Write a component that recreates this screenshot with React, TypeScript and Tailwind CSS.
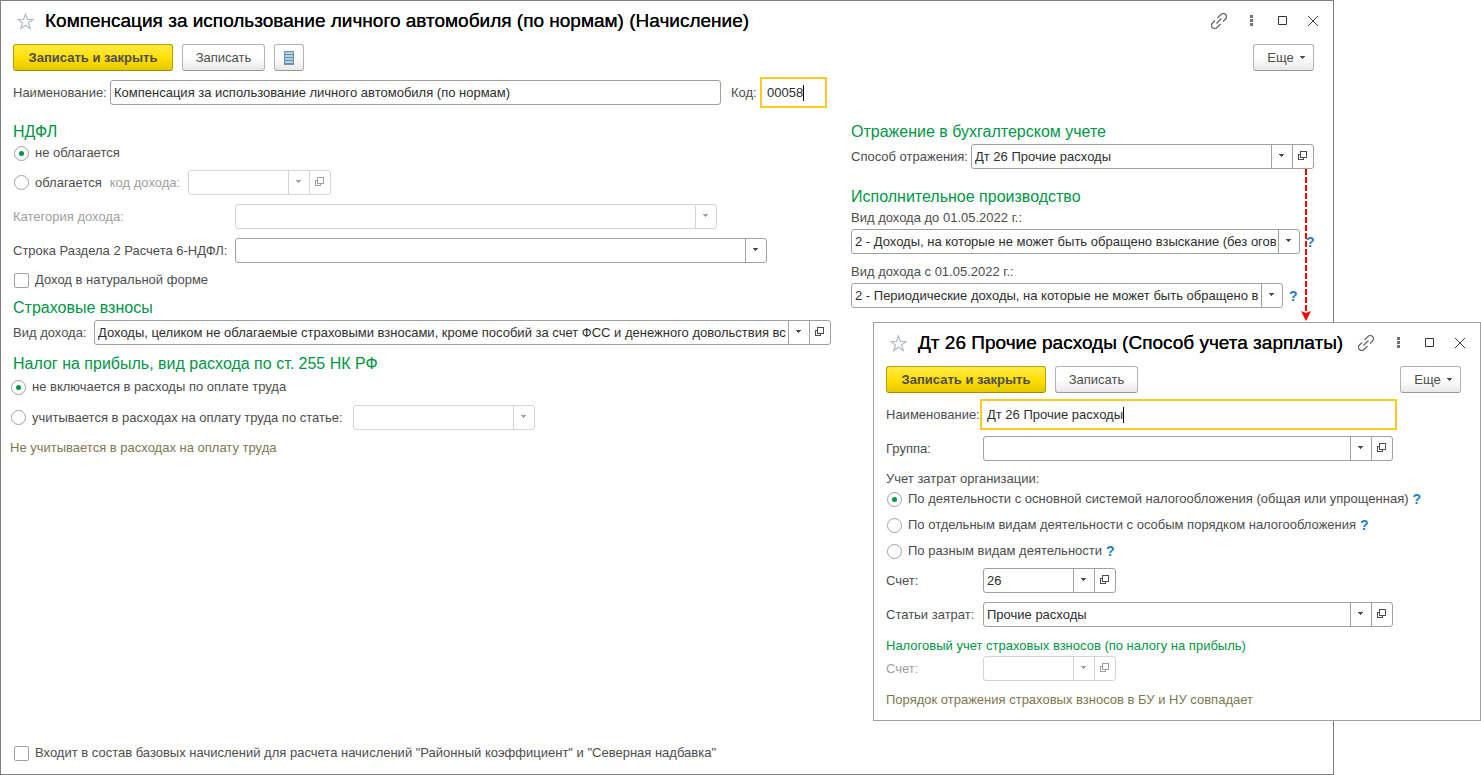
import React, {ReactNode, useId, useState} from "react"
import clsx from "clsx"

type ComboProps = {
    id?: string
    label?: string
    value?: string
    disabled?: boolean
    open?: boolean
    className?: string
}

const OpenIcon = () => <svg width="9" height="9" viewBox="0 0 9 9" fill="none" stroke="currentColor" shapeRendering="crispEdges">
    <path d="M2.500.5h6v6h-6zM2 3.500H.5v5h5V7" />
    <path d="M2.500 3v3" />
</svg>

const Caret = () => <svg width="5" height="3" viewBox="0 0 5 3" fill="currentColor" shapeRendering="crispEdges">
    <path d="M0 0h5v1h-1v1h-1v1h-1v-1h-1v-1h-1z" />
</svg>

function Combo({id, label, value = '', disabled, open, className}: ComboProps) {
    return <div className={clsx('flex h-[25px] rounded-[3px] border bg-white', disabled ? 'border-[#d4d4d4] text-[#a0a0a0]' : 'border-[#a0a0a0] text-[#4d4d4d]', className)}>
        <div className="relative min-w-0 flex-1">
            <select
                id={id}
                aria-label={label}
                disabled={disabled}
                className="h-full w-full appearance-none overflow-hidden bg-transparent pr-[23px] pl-[3px] whitespace-nowrap text-[#2e2e2e] opacity-100 outline-none"
            >
                <option>{value}</option>
            </select>
            <span className={clsx('pointer-events-none absolute inset-y-0 right-0 flex w-[21px] items-center justify-center border-l pr-px pb-[2px]', disabled ? 'border-[#d4d4d4]' : 'border-[#a0a0a0]')}>
                <Caret />
            </span>
        </div>
        {open && <button
            type="button"
            aria-label="Открыть"
            disabled={disabled}
            className={clsx('flex w-[21px] items-center justify-center border-l pr-px pb-[2px]', disabled ? 'border-[#d4d4d4]' : 'border-[#a0a0a0]')}
        >
            <OpenIcon />
        </button>}
    </div>
}

function ActiveInput({id, value, className}: {id: string, value: string, className?: string}) {
    const [text, setText] = useState<string>(value)

    return <div className={clsx('flex h-[31px] items-center border-2 border-[#fbcb1f] bg-white pl-[5px]', className)}>
        <input id={id} value={text} onChange={e => setText(e.target.value)} className="[field-sizing:content] text-[#2e2e2e] outline-none" />
        <span className="h-4 w-px bg-black" />
    </div>
}

function Radio({name, checked, children}: {name: string, checked?: boolean, children: ReactNode}) {
    return <label className="flex items-center gap-[6px] pl-px">
        <input
            type="radio"
            name={name}
            defaultChecked={checked}
            className="grid size-[15px] shrink-0 appearance-none place-items-center rounded-full border border-[#a0a0a0] bg-white checked:before:size-[5px] checked:before:rounded-full checked:before:bg-[#009646]"
        />
        {children}
    </label>
}

function Checkbox({children}: {children: ReactNode}) {
    return <label className="flex h-[22px] items-center gap-[6px] pl-px">
        <input type="checkbox" className="size-[15px] shrink-0 appearance-none rounded-[2px] border border-[#a0a0a0] bg-white checked:bg-[#009646]" />
        {children}
    </label>
}

const Help = () => <button type="button" aria-label="Справка" className="text-sm leading-4 font-bold text-[#1a80c4]">?</button>

const Heading = ({children}: {children: ReactNode}) => <h2 className="h-5 text-base leading-[22px] whitespace-nowrap text-[#009646]">{children}</h2>

function TitleBar({title}: {title: string}) {
    return <header className="flex h-[43px] items-center pr-[14px] pb-[3px] pl-4">
        <button type="button" aria-label="Избранное">
            <svg width="17" height="17" viewBox="0 0 17 17" fill="none" stroke="#b4bac0" strokeWidth="1.200">
                <path d="M8.500 1L10.400 6.400L16.100 6.500L11.500 10L13.200 15.500L8.500 12.200L3.800 15.500L5.500 10L.9 6.500L6.600 6.400Z" />
            </svg>
        </button>
        <h1 className="ml-[11px] flex-1 text-[19px] leading-6 whitespace-nowrap text-black [text-shadow:0_0_0_#000]">{title}</h1>
        <div className="flex items-center text-[#4d4d4d]">
            <button type="button" aria-label="Получить ссылку">
                <svg width="16" height="16" viewBox="0 0 16 16" fill="none" stroke="#666" strokeWidth="1.200">
                    <path d="M5.500 10.500L10.500 5.500" />
                    <path d="M6.500 5L10 1.500A3 3 0 0 1 14.500 6L12 8.500" />
                    <path d="M9.500 11L6 14.500A3 3 0 0 1 1.500 10L4 7.500" />
                </svg>
            </button>
            <button type="button" aria-label="Меню" className="ml-[22px]">
                <svg width="4" height="12" viewBox="0 0 4 12" fill="#707070">
                    <path d="M1 0h3v3H1zM1 4h3v3H1zM1 8h3v3H1z" />
                </svg>
            </button>
            <button type="button" aria-label="Развернуть" className="ml-[25px]">
                <svg width="10" height="10" viewBox="0 0 10 10" fill="none" stroke="#333"><path d="M.5.5h8v8h-8z" /></svg>
            </button>
            <button type="button" aria-label="Закрыть" className="ml-[19px]">
                <svg width="12" height="12" viewBox="0 0 12 12" fill="none" stroke="#444"><path d="M1 1l10 10M11 1L1 11" /></svg>
            </button>
        </div>
    </header>
}

const plainButton = 'flex h-[27px] items-center justify-center rounded-[3px] border border-[#b3b3b3] border-b-[#999] bg-linear-to-b from-white from-50% to-[#e8e8e8] text-[#4d4d4d]'

function CommandBar({list}: {list?: boolean}) {
    return <div className="flex h-[27px] gap-[9px]">
        <button type="button" className="h-[27px] w-40 rounded-[3px] border border-[#b79f00] border-b-[#a08c00] bg-linear-to-b from-[#ffea3d] via-[#ffe000] to-[#e6c800] font-bold whitespace-nowrap text-[#4d4d4d]">Записать и закрыть</button>
        <button type="button" className={clsx(plainButton, 'w-[83px]')}>Записать</button>
        {list && <button type="button" aria-label="Список" className={clsx(plainButton, 'w-[30px]')}>
            <svg width="10" height="14" viewBox="0 0 10 14" shapeRendering="crispEdges">
                <path fill="#6690ae" d="M0 0h10v14H0z" />
                <path fill="#b4d0e4" d="M1 1h8v2H1zM1 4h8v2H1zM1 7h8v2H1zM1 10h8v2H1z" />
            </svg>
        </button>}
        <button type="button" className={clsx(plainButton, 'ml-auto w-[61px] gap-[6px] pl-[5px]')}>Еще <Caret /></button>
    </div>
}

function AccountingMethodWindow() {
    const id = useId()

    return <section className="absolute top-[322px] right-0 w-[608px] border border-[#a0a0a0] bg-white pb-[11px]">
        <TitleBar title="Дт 26 Прочие расходы (Способ учета зарплаты)" />
        <div className="pr-[19px] pl-3">
            <CommandBar />
            <div className="mt-[6px] mr-16 flex items-center">
                <label htmlFor={id + 'name'} className="w-[94px] shrink-0">Наименование:</label>
                <ActiveInput id={id + 'name'} value="Дт 26 Прочие расходы" className="flex-1" />
            </div>
            <div className="mt-[6px] mr-[68px] flex items-center">
                <label htmlFor={id + 'group'} className="w-[97px] shrink-0">Группа:</label>
                <Combo id={id + 'group'} open className="flex-1" />
            </div>
            <fieldset className="mt-[7px]">
                <legend className="h-5 leading-[22px]">Учет затрат организации:</legend>
                <div className="flex h-[22px] items-center gap-1"><Radio name="activity" checked>По деятельности с основной системой налогообложения (общая или упрощенная)</Radio><Help /></div>
                <div className="mt-1 flex h-[22px] items-center gap-1"><Radio name="activity">По отдельным видам деятельности с особым порядком налогообложения</Radio><Help /></div>
                <div className="mt-1 flex h-[22px] items-center gap-1"><Radio name="activity">По разным видам деятельности</Radio><Help /></div>
            </fieldset>
            <div className="mt-[6px] flex items-center">
                <label htmlFor={id + 'account'} className="w-[97px] shrink-0">Счет:</label>
                <Combo id={id + 'account'} value="26" open className="w-[133px]" />
            </div>
            <div className="mt-[9px] mr-[68px] flex items-center">
                <label htmlFor={id + 'items'} className="w-[97px] shrink-0">Статьи затрат:</label>
                <Combo id={id + 'items'} value="Прочие расходы" open className="flex-1" />
            </div>
            <h2 className="mt-[8px] h-5 leading-[22px] text-[#009646]">Налоговый учет страховых взносов (по налогу на прибыль)</h2>
            <div className="mt-px flex items-center">
                <label htmlFor={id + 'tax'} className="w-[97px] shrink-0 text-[#a0a0a0]">Счет:</label>
                <Combo id={id + 'tax'} disabled open className="w-[133px]" />
            </div>
            <p className="mt-[8px] h-5 leading-[22px] text-[#7d7850]">Порядок отражения страховых взносов в БУ и НУ совпадает</p>
        </div>
    </section>
}

export default function App() {
    const [name, setName] = useState<string>('Компенсация за использование личного автомобиля (по нормам)')

    return <div className="relative min-h-screen bg-white font-['Liberation_Sans',Arial,sans-serif] text-[13px] leading-4 text-[#4d4d4d]">
        <main className="mr-[147px] flex min-h-screen flex-col border border-[#808080]">
            <TitleBar title="Компенсация за использование личного автомобиля (по нормам) (Начисление)" />
            <div className="flex flex-1 flex-col pr-[19px] pb-[10px] pl-3">
                <CommandBar list />
                <div className="mt-[6px] flex items-center">
                    <label htmlFor="name" className="w-[97px] shrink-0">Наименование:</label>
                    <input id="name" value={name} onChange={e => setName(e.target.value)} className="h-[25px] w-[611px] rounded-[3px] border border-[#a0a0a0] pl-[3px] text-[#2e2e2e] outline-none" />
                    <label htmlFor="code" className="ml-[10px] w-[29px] shrink-0">Код:</label>
                    <ActiveInput id="code" value="00058" className="w-[67px]" />
                </div>

                <div className="mt-[13px] flex gap-5">
                    <div className="min-w-0 flex-1">
                        <Heading>НДФЛ</Heading>
                        <div className="mt-px flex h-[22px] items-center"><Radio name="ndfl" checked>не облагается</Radio></div>
                        <div className="mt-[6px] flex items-center">
                            <Radio name="ndfl">облагается</Radio>
                            <label htmlFor="incomeCode" className="ml-2 w-[78px] shrink-0 text-[#a0a0a0]">код дохода:</label>
                            <Combo id="incomeCode" disabled open className="w-[143px]" />
                        </div>
                        <div className="mt-[9px] flex items-center">
                            <label htmlFor="category" className="w-[222px] shrink-0 text-[#a0a0a0]">Категория дохода:</label>
                            <Combo id="category" disabled className="w-[482px]" />
                        </div>
                        <div className="mt-[9px] flex items-center">
                            <label htmlFor="line" className="w-[222px] shrink-0 whitespace-nowrap">Строка Раздела 2 Расчета 6-НДФЛ:</label>
                            <Combo id="line" className="w-[532px]" />
                        </div>
                        <div className="mt-[6px]"><Checkbox>Доход в натуральной форме</Checkbox></div>

                        <div className="mt-[6px]"><Heading>Страховые взносы</Heading></div>
                        <div className="mt-[3px] flex items-center">
                            <label htmlFor="insurance" className="w-[81px] shrink-0">Вид дохода:</label>
                            <Combo
                                id="insurance"
                                value="Доходы, целиком не облагаемые страховыми взносами, кроме пособий за счет ФСС и денежного довольствия вс"
                                open
                                className="min-w-0 flex-1"
                            />
                        </div>

                        <div className="mt-2"><Heading>Налог на прибыль, вид расхода по ст. 255 НК РФ</Heading></div>
                        <div className="-ml-[3px]">
                            <div className="mt-[3px] flex h-[22px] items-center"><Radio name="profit" checked>не включается в расходы по оплате труда</Radio></div>
                            <div className="mt-[7px] flex items-center gap-[10px]">
                                <Radio name="profit">учитывается в расходах на оплату труда по статье:</Radio>
                                <Combo label="Статья расходов" disabled className="w-[182px]" />
                            </div>
                            <p className="mt-[7px] h-5 leading-[22px] text-[#7d7850]">Не учитывается в расходах на оплату труда</p>
                        </div>
                    </div>

                    <div className="w-[463px] shrink-0">
                        <Heading>Отражение в бухгалтерском учете</Heading>
                        <div className="relative mt-[3px] flex items-center">
                            <label htmlFor="method" className="w-[120px] shrink-0">Способ отражения:</label>
                            <Combo id="method" value="Дт 26 Прочие расходы" open className="flex-1" />
                            {/* points from the open button to the window it brings up */}
                            <svg className="pointer-events-none absolute top-full right-[3px] z-10" width="10" height="152" viewBox="0 0 10 152">
                                <path d="M5 0V144" stroke="#f00" strokeWidth="2" strokeDasharray="6 2" />
                                <path d="M0 142L5 144L10 142L5 152Z" fill="#f00" />
                            </svg>
                        </div>
                        <div className="mt-[17px]"><Heading>Исполнительное производство</Heading></div>
                        <label htmlFor="before" className="mt-px block h-5 leading-[22px]">Вид дохода до 01.05.2022 г.:</label>
                        <div className="mt-[2px] flex items-center gap-[6px]">
                            <Combo id="before" value="2 - Доходы, на которые не может быть обращено взыскание (без огов" className="w-[449px] shrink-0" />
                            <Help />
                        </div>
                        <label htmlFor="after" className="mt-[7px] block h-5 leading-[22px]">Вид дохода с 01.05.2022 г.:</label>
                        <div className="mt-[2px] flex items-center gap-[6px]">
                            <Combo id="after" value="2 - Периодические доходы, на которые не может быть обращено в" className="w-[432px]" />
                            <Help />
                        </div>
                    </div>
                </div>

                <div className="mt-auto"><Checkbox>Входит в состав базовых начислений для расчета начислений "Районный коэффициент" и "Северная надбавка"</Checkbox></div>
            </div>
        </main>
        <AccountingMethodWindow />
    </div>
}
